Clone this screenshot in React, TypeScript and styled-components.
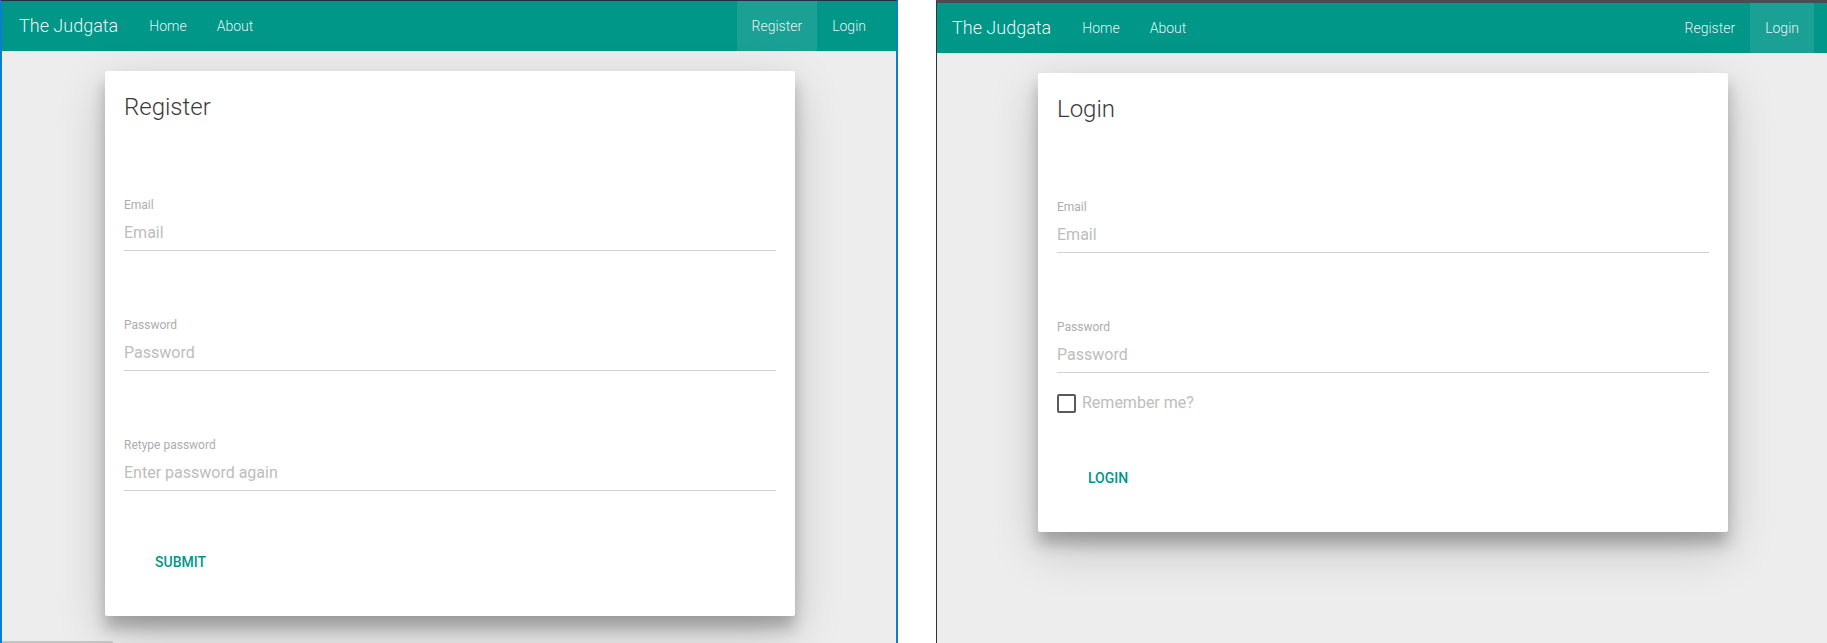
import React from "react";
import styled, { createGlobalStyle } from "styled-components";

const GlobalStyle = createGlobalStyle`
  html, body {
    margin: 0;
    padding: 0;
  }
  body {
    font-family: Roboto, "Noto Sans", "Liberation Sans", sans-serif;
    background: #ffffff;
    width: 1827px;
    height: 643px;
    overflow: hidden;
  }
  * { box-sizing: border-box; }
`;

type Side = "left" | "right";

const Screen = styled.div`
  display: flex;
  width: 1827px;
  height: 643px;
`;

const Window = styled.div<{ $side: Side }>`
  display: flex;
  flex-direction: column;
  background: #ededed;
  height: 643px;
  ${({ $side }) =>
    $side === "left"
      ? `
    width: 898px;
    border-left: 2px solid #0a7fd0;
    border-right: 2px solid #0a7fd0;
    border-top: 1px solid #233142;
  `
      : `
    flex: 1;
    border-left: 1px solid #333333;
    border-top: 3px solid #4a4b53;
  `}
`;

const Gutter = styled.div`
  width: 38px;
  background: #ffffff;
`;

const Nav = styled.nav<{ $side: Side }>`
  display: flex;
  align-items: center;
  height: 50px;
  flex-shrink: 0;
  background: #009688;
  padding: ${({ $side }) => ($side === "left" ? "0 15px 0 17px" : "0 13px 0 15px")};
  color: #ffffff;
`;

const Brand = styled.a`
  font-size: 18px;
  font-weight: 300;
  line-height: 50px;
  color: rgba(255, 255, 255, 0.95);
  margin-right: 16px;
  white-space: nowrap;
`;

const NavList = styled.ul`
  display: flex;
  height: 100%;
  margin: 0;
  padding: 0;
  list-style: none;
`;

const NavItem = styled.li<{ $active?: boolean }>`
  padding: 0 15px;
  line-height: 50px;
  font-size: 14px;
  font-weight: 300;
  color: rgba(255, 255, 255, 0.92);
  background: ${({ $active }) => ($active ? "rgba(255,255,255,0.1)" : "transparent")};
`;

const NavFill = styled.div`
  flex: 1;
`;

const Main = styled.main`
  flex: 1;
  display: flex;
  justify-content: center;
  align-items: flex-start;
  padding: 20px 0 0 2px;
`;

const Card = styled.form`
  width: 690px;
  display: flex;
  flex-direction: column;
  align-items: stretch;
  background: #ffffff;
  border-radius: 2px;
  padding: 20px 19px 36px;
  box-shadow: 0 12px 15px 0 rgba(0, 0, 0, 0.24), 0 17px 50px 0 rgba(0, 0, 0, 0.19);
`;

const CardTitle = styled.h2`
  margin: 0 0 8px;
  font-size: 24px;
  line-height: 32px;
  font-weight: 300;
  color: #3a3a3a;
`;

const Field = styled.div`
  display: flex;
  flex-direction: column;
  margin-top: 66px;
`;

const FieldLabel = styled.label`
  font-size: 12px;
  line-height: 16px;
  color: #adadad;
`;

const TextInput = styled.input`
  margin-top: 2px;
  width: 100%;
  height: 36px;
  padding: 0;
  border: none;
  border-bottom: 1px solid #d0d0d0;
  outline: none;
  background: transparent;
  font-family: Roboto, "Noto Sans", sans-serif;
  font-size: 16px;
  color: rgba(0, 0, 0, 0.87);
  &::placeholder {
    color: #bdbdbd;
    opacity: 1;
  }
`;

const CheckRow = styled.label`
  display: flex;
  align-items: center;
  gap: 6px;
  height: 20px;
  margin-top: 20px;
  font-size: 16px;
  line-height: 20px;
  color: #bdbdbd;
`;

const CheckBox = styled.span`
  width: 19px;
  height: 19px;
  border: 2px solid #5a5a5a;
  border-radius: 2px;
  flex-shrink: 0;
`;

const Actions = styled.div<{ $gap: number }>`
  display: flex;
  margin-top: ${({ $gap }) => $gap}px;
`;

const FlatButton = styled.button`
  height: 36px;
  line-height: 36px;
  padding: 0 31px;
  border: none;
  background: transparent;
  font-family: Roboto, "Noto Sans", sans-serif;
  font-size: 14px;
  font-weight: 500;
  text-transform: uppercase;
  color: #009688;
  cursor: pointer;
`;

const ScrollTrack = styled.div`
  height: 2px;
  flex-shrink: 0;
  display: flex;
`;

const ScrollThumb = styled.div`
  width: 111px;
  background: #c4c4c4;
`;

type NavBarProps = { active: "Register" | "Login"; side: Side };

const NavBar = ({ active, side }: NavBarProps) => (
  <Nav $side={side}>
    <Brand>The Judgata</Brand>
    <NavList>
      <NavItem>Home</NavItem>
      <NavItem>About</NavItem>
    </NavList>
    <NavFill />
    <NavList>
      <NavItem $active={active === "Register"}>Register</NavItem>
      <NavItem $active={active === "Login"}>Login</NavItem>
    </NavList>
  </Nav>
);

const InputField = ({ label, placeholder, type }: { label: string; placeholder: string; type: string }) => (
  <Field>
    <FieldLabel>{label}</FieldLabel>
    <TextInput type={type} placeholder={placeholder} />
  </Field>
);

export default function App() {
  return (
    <>
      <GlobalStyle />
      <Screen>
        <Window $side="left">
          <NavBar active="Register" side="left" />
          <Main>
            <Card onSubmit={(e) => e.preventDefault()}>
              <CardTitle>Register</CardTitle>
              <InputField label="Email" placeholder="Email" type="email" />
              <InputField label="Password" placeholder="Password" type="password" />
              <InputField label="Retype password" placeholder="Enter password again" type="password" />
              <Actions $gap={53}>
                <FlatButton type="submit">Submit</FlatButton>
              </Actions>
            </Card>
          </Main>
          <ScrollTrack>
            <ScrollThumb />
          </ScrollTrack>
        </Window>
        <Gutter />
        <Window $side="right">
          <NavBar active="Login" side="right" />
          <Main>
            <Card onSubmit={(e) => e.preventDefault()}>
              <CardTitle>Login</CardTitle>
              <InputField label="Email" placeholder="Email" type="email" />
              <InputField label="Password" placeholder="Password" type="password" />
              <CheckRow>
                <CheckBox />
                Remember me?
              </CheckRow>
              <Actions $gap={47}>
                <FlatButton type="submit">Login</FlatButton>
              </Actions>
            </Card>
          </Main>
        </Window>
      </Screen>
    </>
  );
}
